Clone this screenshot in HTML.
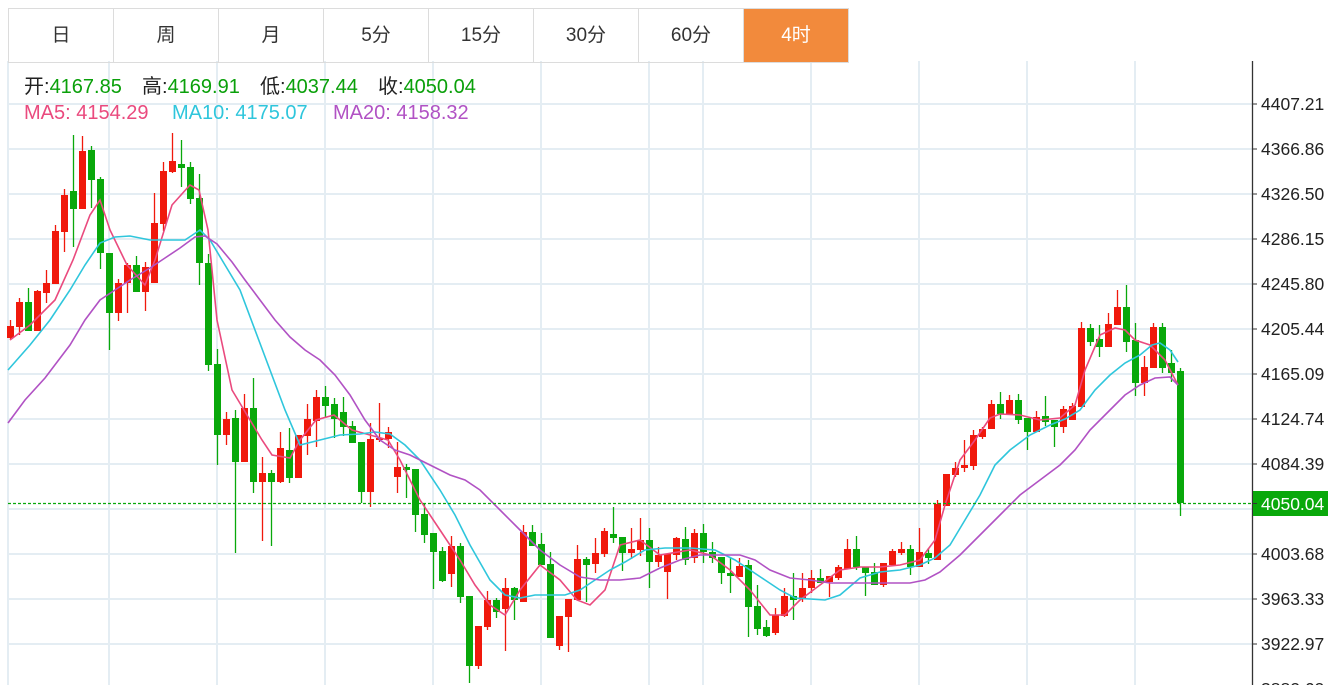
<!DOCTYPE html>
<html><head><meta charset="utf-8"><style>
body{margin:0;width:1328px;height:685px;overflow:hidden;background:#fff;font-family:"Liberation Sans","Noto Sans CJK SC",sans-serif;}
.tabs{position:absolute;left:8px;top:8px;height:53px;display:flex;border:1px solid #dcdcdc;border-right:none}
.tab{width:104px;height:53px;border-right:1px solid #dcdcdc;text-align:center;line-height:53px;font-size:19px;color:#333}
.tab.on{background:#f28a3c;color:#fff}
.t{position:absolute;font-size:20px;color:#222;white-space:pre;line-height:24px}
.t b{font-weight:normal;color:#0aa00a}
svg{position:absolute;left:0;top:0}
</style></head><body>
<svg id="s" width="1328" height="685"></svg>
<div class="tabs"><div class="tab">日</div><div class="tab">周</div><div class="tab">月</div><div class="tab">5分</div><div class="tab">15分</div><div class="tab">30分</div><div class="tab">60分</div><div class="tab on">4时</div></div>
<div class="t" style="left:24px;top:75px">开:<b>4167.85</b></div>
<div class="t" style="left:142px;top:75px">高:<b>4169.91</b></div>
<div class="t" style="left:260px;top:75px">低:<b>4037.44</b></div>
<div class="t" style="left:378px;top:75px">收:<b>4050.04</b></div>
<div class="t" style="left:24px;top:101px;color:#ea4a7e">MA5: 4154.29</div>
<div class="t" style="left:172px;top:101px;color:#2fc6dc">MA10: 4175.07</div>
<div class="t" style="left:333px;top:101px;color:#b152c4">MA20: 4158.32</div>
<script>
var s='';
var G='#e4edf3';
for(var y=104;y<=685;y+=45)s+='<line x1="8" y1="'+y+'" x2="1252" y2="'+y+'" stroke="'+G+'" stroke-width="2"/>';
[8,109,217,325,433,541,649,703,811,919,1027,1135].forEach(function(x){s+='<line x1="'+x+'" y1="61" x2="'+x+'" y2="685" stroke="'+G+'" stroke-width="2"/>';});
var D=[['r',326,338,320,340],['r',302,327,298,335],['g',302,331,288,331],['r',291,331,290,331],['r',283,293,270,303],['r',231,284,225,284],['r',195,232,189,252],['g',191,209,135,247],['r',151,209,136,209],['g',150,180,146,208],
['g',179,253,177,269],['g',253,313,253,350],['r',283,313,279,321],['r',265,283,263,313],['g',265,292,256,292],['r',267,292,262,311],['r',223,283,193,283],['r',171,224,162,231],['r',161,172,133,173],['g',164,168,140,187],
['g',167,199,162,204],['g',198,263,174,285],['g',263,365,254,371],['g',364,435,349,465],['r',419,435,412,445],['g',418,462,410,553],['r',408,462,394,462],['g',408,482,378,493],['r',473,482,457,541],['g',473,482,470,546],
['r',448,482,432,483],['g',450,478,428,483],['r',435,478,435,478],['r',419,436,404,455],['r',397,421,390,447],['g',397,406,386,418],['g',404,419,398,438],['g',412,427,397,436],['g',426,443,421,443],['g',442,492,442,503],
['r',439,492,423,507],['r',438,440,403,442],['r',432,439,427,448],['r',467,477,442,493],['g',467,470,464,498],['g',469,515,469,532],['g',514,535,503,543],['g',533,552,533,589],['g',551,581,547,582],['r',546,574,536,587],
['g',546,597,543,603],['g',596,666,596,683],['r',626,666,626,669],['r',600,627,591,630],['g',600,612,598,618],['r',588,609,578,651],['g',588,600,587,620],['r',532,602,525,602],['g',532,546,525,546],['g',544,565,533,565],
['g',564,638,552,638],['r',616,646,616,650],['r',599,617,599,652],['r',559,600,545,600],['g',559,565,557,602],['r',553,564,538,573],['r',531,554,528,557],['g',534,538,507,543],['g',537,553,537,571],['r',549,553,528,559],
['r',540,550,518,556],['g',540,562,528,588],['r',555,562,547,567],['r',554,572,554,599],['r',538,555,537,560],['g',539,560,527,565],['r',533,558,529,563],['g',533,552,524,563],['g',552,558,542,563],['g',557,573,557,584],
['g',573,576,558,593],['r',566,577,558,577],['g',565,607,560,637],['g',606,629,585,635],['g',627,636,620,637],['r',615,633,608,635],['r',596,616,588,617],['g',596,600,573,620],['r',588,598,573,602],['r',578,588,570,593],
['g',578,583,569,583],['r',576,582,576,597],['r',567,578,565,580],['r',549,569,539,569],['g',549,567,536,570],['g',567,573,567,596],['g',572,585,563,585],['r',563,585,563,587],['r',551,565,549,565],['r',549,553,542,555],
['g',549,567,545,575],['r',552,567,528,567],['g',553,558,548,564],['r',504,560,500,560],['r',474,506,474,506],['r',468,475,462,477],['r',465,468,440,472],['r',435,466,430,470],['r',429,437,427,439],['r',404,429,400,429],
['g',404,414,392,419],['r',400,415,395,415],['g',400,420,394,424],['g',418,432,418,450],['r',417,432,411,432],['g',416,422,396,426],['g',420,427,420,447],['r',409,427,406,433],['r',406,420,403,420],['r',328,407,322,407],
['g',328,342,324,346],['g',339,347,325,357],['r',324,347,313,347],['r',307,325,290,325],['g',307,342,285,352],['g',340,383,323,396],['r',367,383,356,396],['r',327,368,323,368],['g',327,368,323,373],['g',363,373,350,382],
['g',371,503,368,516]];
D.forEach(function(d,i){var x=10.5+9*i,c=d[0]=='r'?'#f0190c':'#09a80b';
s+='<line x1="'+x+'" y1="'+d[3]+'" x2="'+x+'" y2="'+d[4]+'" stroke="'+c+'" stroke-width="1.3"/>';
s+='<rect x="'+(x-3.5)+'" y="'+d[1]+'" width="7" height="'+Math.max(2,d[2]-d[1])+'" fill="'+c+'"/>';});
function pl(p,c){s+='<polyline fill="none" stroke="'+c+'" stroke-width="1.6" points="'+p+'"/>';}
pl('10,340 30,325 55,300 73,260 90,215 100,200 110,230 127,265 145,285 155,260 172,205 190,185 199,190 208,230 217,320 232,390 250,420 262,440 272,455 290,458 300,440 316,420 334,415 352,430 370,435 388,440 400,460 420,500 440,530 460,560 475,585 490,605 505,615 520,590 540,565 560,580 577,600 590,605 605,590 620,545 640,540 660,555 690,550 710,555 730,570 750,590 770,615 785,615 800,600 820,585 840,570 860,567 880,567 900,565 920,560 935,540 945,505 960,460 975,440 990,418 1000,414 1020,415 1040,420 1060,418 1075,405 1085,370 1100,335 1115,328 1125,330 1135,340 1150,345 1165,360 1178,385','#ea4a7e');
pl('8,370 30,345 50,320 70,290 85,265 100,243 115,237 130,236 150,240 165,240 185,240 200,230 210,240 225,265 240,290 255,330 270,370 285,410 300,445 320,440 340,435 360,434 375,432 390,434 405,445 420,460 440,490 455,515 470,545 490,580 505,595 520,598 535,595 550,595 565,595 580,590 595,580 610,570 625,562 645,550 665,548 690,548 715,550 735,560 750,570 765,580 780,590 795,598 810,599 825,600 840,595 860,578 880,572 900,570 920,565 935,558 950,545 965,520 980,495 995,465 1010,450 1030,435 1050,425 1065,419 1080,410 1095,390 1110,375 1125,363 1140,355 1152,345 1160,343 1170,350 1178,362','#2fc6dc');
pl('8,423 25,400 45,378 70,345 85,320 100,300 115,290 130,280 150,268 165,258 180,248 195,237 205,236 217,244 232,262 245,280 260,300 275,320 290,337 305,350 320,360 335,375 350,395 365,420 380,440 395,450 410,455 430,465 450,475 465,480 480,490 500,510 520,530 540,550 560,565 580,577 600,580 620,580 640,578 660,568 680,560 700,555 720,555 740,555 755,560 770,570 790,578 810,580 830,583 850,583 870,583 890,583 910,583 925,580 940,572 960,555 980,535 1000,515 1020,495 1040,480 1060,465 1075,450 1090,430 1110,410 1125,395 1140,385 1155,378 1170,377 1178,385','#b152c4');
s+='<line x1="8" y1="503.5" x2="1252" y2="503.5" stroke="#09a80b" stroke-width="1.3" stroke-dasharray="3,2"/>';
s+='<line x1="1252.5" y1="61" x2="1252.5" y2="685" stroke="#333" stroke-width="1.3"/>';
var L=['4407.21','4366.86','4326.50','4286.15','4245.80','4205.44','4165.09','4124.74','4084.39','','4003.68','3963.33','3922.97','3882.62'];
L.forEach(function(t,i){var y=104+45*i;s+='<line x1="1252" y1="'+y+'" x2="1257" y2="'+y+'" stroke="#333"/>';
if(t)s+='<text x="1261" y="'+(y+6)+'" font-size="17.5" fill="#222" font-family="Liberation Sans,sans-serif">'+t+'</text>';});
s+='<rect x="1253" y="491" width="75" height="25" fill="#09a80b"/><line x1="1252" y1="503.5" x2="1257" y2="503.5" stroke="#333"/>';
s+='<text x="1261" y="510" font-size="17.5" fill="#fff" font-family="Liberation Sans,sans-serif">4050.04</text>';
document.getElementById('s').innerHTML=s;
</script>
</body></html>
